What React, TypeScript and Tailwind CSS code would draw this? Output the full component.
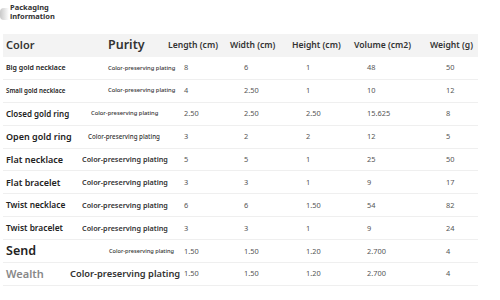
import React from "react";

type Row = {
  name: string;
  nameCls: string;
  purityCls: string;
  l: string;
  w: string;
  h: string;
  v: string;
  g: string;
};

const rows: Row[] = [
  { name: "Big gold necklace", nameCls: "text-[7px] w-[105px]", purityCls: "text-[5.8px] font-medium", l: "8", w: "6", h: "1", v: "48", g: "50" },
  { name: "Small gold necklace", nameCls: "text-[6.2px] w-[105px]", purityCls: "text-[5.8px] font-medium", l: "4", w: "2.50", h: "1", v: "10", g: "12" },
  { name: "Closed gold ring", nameCls: "text-[8px] w-[88px]", purityCls: "text-[5.8px] font-medium", l: "2.50", w: "2.50", h: "2.50", v: "15.625", g: "8" },
  { name: "Open gold ring", nameCls: "text-[9px] w-[85px]", purityCls: "text-[6.2px] font-medium", l: "3", w: "2", h: "2", v: "12", g: "5" },
  { name: "Flat necklace", nameCls: "text-[9px] w-[79px]", purityCls: "text-[7.25px] font-semibold", l: "5", w: "5", h: "1", v: "25", g: "50" },
  { name: "Flat bracelet", nameCls: "text-[9px] w-[79px]", purityCls: "text-[7.25px] font-semibold", l: "3", w: "3", h: "1", v: "9", g: "17" },
  { name: "Twist necklace", nameCls: "text-[8.4px] w-[79px]", purityCls: "text-[7.25px] font-semibold", l: "6", w: "6", h: "1.50", v: "54", g: "82" },
  { name: "Twist bracelet", nameCls: "text-[8.4px] w-[79px]", purityCls: "text-[7.25px] font-semibold", l: "3", w: "3", h: "1", v: "9", g: "24" },
  { name: "Send", nameCls: "text-[12.5px] w-[106px]", purityCls: "text-[5.6px] font-medium", l: "1.50", w: "1.50", h: "1.20", v: "2.700", g: "4" },
  { name: "Wealth", nameCls: "text-[11px] w-[67px] !text-[#888]", purityCls: "text-[9.3px] font-semibold", l: "1.50", w: "1.50", h: "1.20", v: "2.700", g: "4" },
];

export default function App() {
  return (
    <div
      className="w-[500px] h-[300px] bg-white overflow-hidden relative text-[#222]"
      style={{ fontFamily: '"Noto Sans", "Open Sans", sans-serif' }}
    >
      <div className="flex items-center h-[34px] pb-[10px]">
        <div className="w-[9px] h-[12px] mt-[4px] bg-gradient-to-r from-[#c8c8c8] to-white rounded-l-sm" />
        <div className="ml-[1px] text-[7.5px] font-bold leading-[9px] text-[#333]">
          Packaging
          <br />
          information
        </div>
      </div>

      <div className="mx-[3px] w-[475px]">
        <div className="flex items-center h-[23px] bg-[#f3f3f3] font-semibold text-[#333]">
          <div className="w-[105px] pl-[3px] text-[11px]">Color</div>
          <div className="w-[60px] text-[12.5px]">Purity</div>
          <div className="w-[62px] text-[8.6px]">Length (cm)</div>
          <div className="w-[62px] text-[8.6px]">Width (cm)</div>
          <div className="w-[62px] text-[8.6px]">Height (cm)</div>
          <div className="w-[76px] text-[8.6px]">Volume (cm2)</div>
          <div className="text-[8.6px]">Weight (g)</div>
        </div>

        {rows.map((r) => (
          <div key={r.name} className="flex items-center h-[22.9px] border-b border-[#efefef]">
            <div className={`shrink-0 pl-[3px] font-semibold text-[#222] whitespace-nowrap ${r.nameCls}`}>{r.name}</div>
            <div className={`whitespace-nowrap text-[#333] w-[0px] flex-1 ${r.purityCls}`}>Color-preserving plating</div>
            <div className="w-[294px] shrink-0 flex text-[7.4px] text-[#555]">
              <div className="w-[60px]">{r.l}</div>
              <div className="w-[62px]">{r.w}</div>
              <div className="w-[61px]">{r.h}</div>
              <div className="w-[79px]">{r.v}</div>
              <div>{r.g}</div>
            </div>
          </div>
        ))}
      </div>
    </div>
  );
}
